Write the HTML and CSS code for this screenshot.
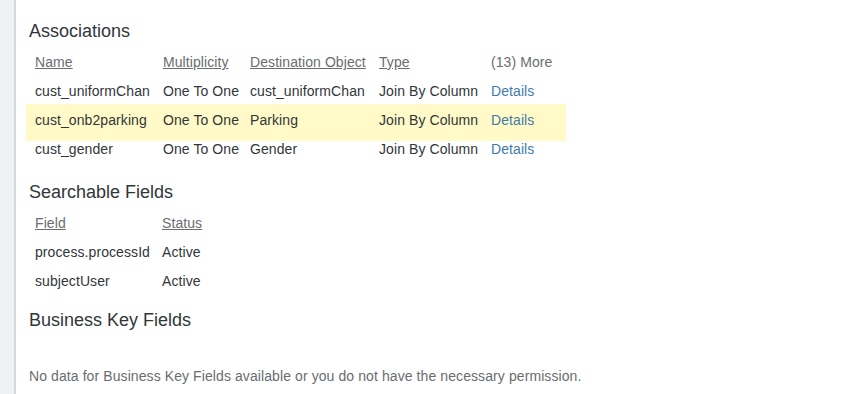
FILE: index.html
```html
<!DOCTYPE html>
<html lang="en">
<head>
  <meta charset="UTF-8">
  <title>Object Definition</title>
  <link rel="stylesheet" href="styles.css">
</head>
<body>
  <div class="layout">
    <aside class="rail"></aside>
    <main class="panel">
      <section class="block">
        <h2 class="title">Associations</h2>
        <table class="grid assoc">
          <thead>
            <tr>
              <th class="sortable">Name</th>
              <th class="sortable">Multiplicity</th>
              <th class="sortable">Destination Object</th>
              <th class="sortable">Type</th>
              <th class="more">(13) More</th>
            </tr>
          </thead>
          <tbody>
            <tr class="first">
              <td>cust_uniformChan</td>
              <td>One To One</td>
              <td>cust_uniformChan</td>
              <td>Join By Column</td>
              <td><a href="#" class="link">Details</a></td>
            </tr>
            <tr class="selected">
              <td>cust_onb2parking</td>
              <td>One To One</td>
              <td>Parking</td>
              <td>Join By Column</td>
              <td><a href="#" class="link">Details</a></td>
            </tr>
            <tr class="last">
              <td>cust_gender</td>
              <td>One To One</td>
              <td>Gender</td>
              <td>Join By Column</td>
              <td><a href="#" class="link">Details</a></td>
            </tr>
          </tbody>
        </table>
      </section>

      <section class="block">
        <h2 class="title">Searchable Fields</h2>
        <table class="grid search">
          <thead>
            <tr>
              <th class="sortable">Field</th>
              <th class="sortable">Status</th>
            </tr>
          </thead>
          <tbody>
            <tr>
              <td>process.processId</td>
              <td>Active</td>
            </tr>
            <tr>
              <td>subjectUser</td>
              <td>Active</td>
            </tr>
          </tbody>
        </table>
      </section>

      <section class="block keys">
        <h2 class="title">Business Key Fields</h2>
        <p class="empty">No data for Business Key Fields available or you do not have the necessary permission.</p>
      </section>
    </main>
  </div>
</body>
</html>
```

FILE: styles.css
```css
body {
  margin: 0;
  background: #ffffff;
  font-family: "Liberation Sans", Arial, sans-serif;
  color: #32363a;
  overflow: hidden;
}

.layout {
  display: flex;
  height: 394px;
}

.rail {
  width: 14px;
  flex-shrink: 0;
  background: #eef2f5;
  border-right: 2px solid #d5d9dd;
}

.panel {
  flex: 1;
  padding: 19px 0 0 13px;
}

.title {
  margin: 0;
  font-size: 18px;
  font-weight: normal;
  line-height: 24px;
  color: #32363a;
}

.grid {
  border-collapse: collapse;
  margin-left: -3px;
  font-size: 14px;
  letter-spacing: 0.08px;
}

.grid th,
.grid td {
  padding: 0 0 0 9px;
  line-height: 16px;
  text-align: left;
  white-space: nowrap;
}

.grid th {
  font-weight: normal;
  color: #6a6d70;
  padding-top: 11px;
  padding-bottom: 6px;
}

.grid th.sortable {
  text-decoration: underline;
}

.assoc {
  width: 540px;
}

.assoc th:nth-child(1) { width: 119px; }
.assoc th:nth-child(2) { width: 78px; }
.assoc th:nth-child(3) { width: 120px; }
.assoc th:nth-child(4) { width: 103px; }

.assoc .first td {
  padding-top: 7px;
  padding-bottom: 5px;
}

.assoc .selected td {
  background: #fffac8;
  padding-top: 8px;
  padding-bottom: 13px;
}

.assoc .last td {
  padding-top: 0;
}

.link {
  color: #427cac;
  text-decoration: none;
}

.block + .block {
  margin-top: 23px;
}

.block.keys {
  margin-top: 12px;
}

.search th:nth-child(1) { width: 118px; }

.search td {
  padding-top: 6px;
  padding-bottom: 7px;
}

.search tbody tr:first-child td {
  padding-top: 7px;
}

.empty {
  margin: 36px 0 0;
  font-size: 14px;
  line-height: 16px;
  letter-spacing: 0.09px;
  color: #6a6d70;
}
```
